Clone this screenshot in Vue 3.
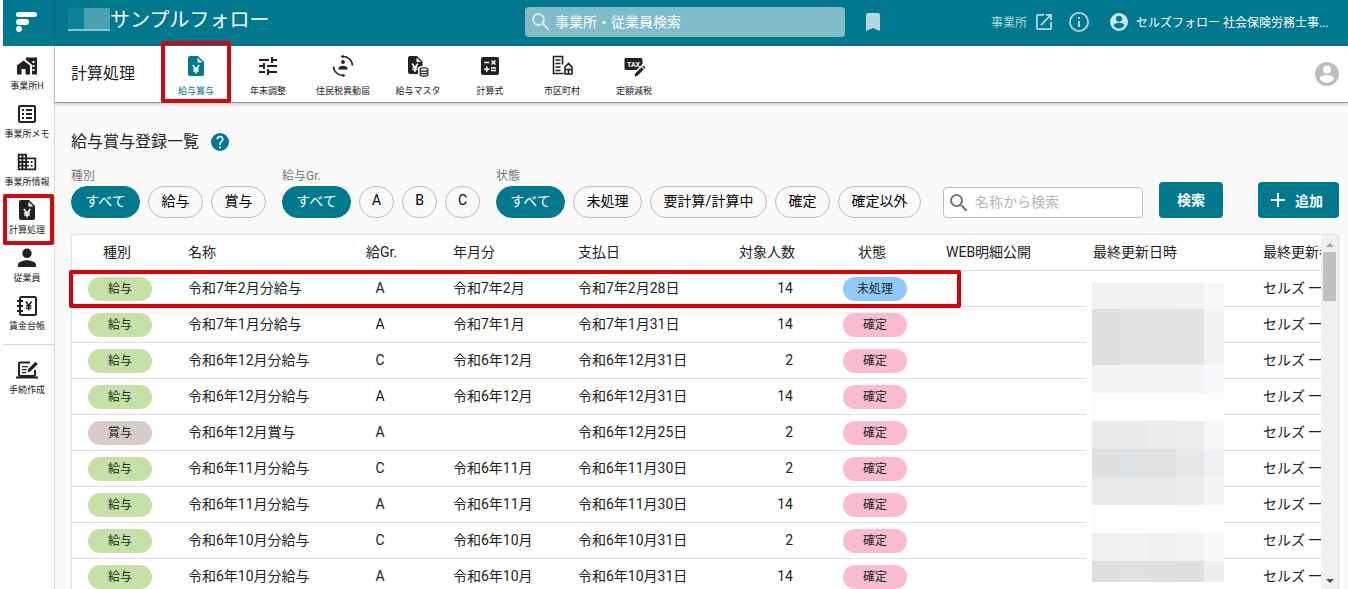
<script setup>
import { ref } from 'vue'

const keyword = ref('')
const globalKeyword = ref('')

const sideItems = [
  { label: '事業所H', icon: 'home' },
  { label: '事業所メモ', icon: 'list' },
  { label: '事業所情報', icon: 'building' },
  { label: '計算処理', icon: 'yen', marked: true },
  { label: '従業員', icon: 'person' },
  { label: '賃金台帳', icon: 'ledger' },
]

const tools = [
  { label: '給与賞与', icon: 'yen', active: true },
  { label: '年末調整', icon: 'tune' },
  { label: '住民税異動届', icon: 'move' },
  { label: '給与マスタ', icon: 'master' },
  { label: '計算式', icon: 'calc' },
  { label: '市区町村', icon: 'city' },
  { label: '定額減税', icon: 'tax' },
]

const groups = [
  { label: '種別', chips: [['すべて', 'w3'], ['給与', 'w2'], ['賞与', 'w2']] },
  { label: '給与Gr.', chips: [['すべて', 'w3'], ['A', 'w1'], ['B', 'w1'], ['C', 'w1']] },
  {
    label: '状態',
    chips: [['すべて', 'w3'], ['未処理', 'w3'], ['要計算/計算中', 'w6'], ['確定', 'w2'], ['確定以外', 'w4']],
  },
]
const selected = ref([0, 0, 0])

const rows = [
  ['給与', '令和7年2月分給与', 'A', '令和7年2月', '令和7年2月28日', 14, '未処理'],
  ['給与', '令和7年1月分給与', 'A', '令和7年1月', '令和7年1月31日', 14, '確定'],
  ['給与', '令和6年12月分給与', 'C', '令和6年12月', '令和6年12月31日', 2, '確定'],
  ['給与', '令和6年12月分給与', 'A', '令和6年12月', '令和6年12月31日', 14, '確定'],
  ['賞与', '令和6年12月賞与', 'A', '', '令和6年12月25日', 2, '確定'],
  ['給与', '令和6年11月分給与', 'C', '令和6年11月', '令和6年11月30日', 2, '確定'],
  ['給与', '令和6年11月分給与', 'A', '令和6年11月', '令和6年11月30日', 14, '確定'],
  ['給与', '令和6年10月分給与', 'C', '令和6年10月', '令和6年10月31日', 2, '確定'],
  ['給与', '令和6年10月分給与', 'A', '令和6年10月', '令和6年10月31日', 14, '確定'],
]

const mosaic = [
  '#f1f1f1', '#f1f1f2', '#f2f1f2', '#f2f2f2', '#f8f8f9',
  '#e0dedf', '#e0e2e4', '#e2e2e1', '#e2e2e0', '#f2f2f3',
  '#e0dedf', '#e0e2e4', '#e2e2e1', '#e2e2e0', '#f2f2f3',
  '#f4f4f4', '#f5f5f6', '#f4f4f5', '#f4f4f5', '#f7f8fb',
  '#fdfdfd', '#fdfdfd', '#fdfdfd', '#fdfdfd', '#fdfdfd',
  '#eae8e9', '#e8e9eb', '#ebebeb', '#eeebec', '#f6f7f8',
  '#e0dedf', '#dfe2e5', '#e2e1df', '#e8e7e8', '#eef0f3',
  '#eae8e9', '#e8e9eb', '#eae9e9', '#eaeaea', '#f4f4f4',
  '#fdfdfd', '#fdfdfd', '#fdfdfd', '#fdfdfd', '#fdfdfd',
  '#f0eff0', '#f2f2f3', '#f0f0f0', '#f4f2f3', '#f9f9f9',
  '#dfdedd', '#dfe0e2', '#e0dfdf', '#dfdedd', '#eceef0',
]
</script>

<template>
  <svg class="sprite" aria-hidden="true">
    <symbol id="home" viewBox="0 0 24 24">
      <path d="M2 11.500v9h4.500v-5.500h4v5.500h4.500v-9L8.500 6.500z" />
      <path fill-rule="evenodd" d="M11 3.500v2.600l6 4.700v9.700h5v-17zM17.500 7h2v2h-2zM17.500 11h2v2h-2zM17.500 15h2v2h-2z" />
    </symbol>
    <symbol id="list" viewBox="0 0 24 24">
      <path d="M11 15h6v2h-6v-2m0-8h6v2h-6V7m0 4h6v2h-6v-2M7 7h2v2H7V7m0 4h2v2H7v-2m0 4h2v2H7v-2M19 3H5a2 2 0 0 0-2 2v14a2 2 0 0 0 2 2h14a2 2 0 0 0 2-2V5a2 2 0 0 0-2-2m0 16H5V5h14v14z" />
    </symbol>
    <symbol id="building" viewBox="-1 -1 26 26">
      <path d="M12 7V3H2v18h20V7H12zM6 19H4v-2h2v2zm0-4H4v-2h2v2zm0-4H4V9h2v2zm0-4H4V5h2v2zm4 12H8v-2h2v2zm0-4H8v-2h2v2zm0-4H8V9h2v2zm0-4H8V5h2v2zm10 12h-8v-2h2v-2h-2v-2h2v-2h-2V9h8v10zm-2-8h-2v2h2v-2zm0 4h-2v2h2v-2z" />
    </symbol>
    <symbol id="yen" viewBox="0 0 24 24">
      <path fill-rule="evenodd" d="M6 2h8l6 6v12a2 2 0 0 1-2 2H6a2 2 0 0 1-2-2V4a2 2 0 0 1 2-2zM13.500 3.700V8.500h4.800z" />
      <path class="cut" d="M8.800 11l3.200 4.200 3.200-4.200M12 15v4.500M9.200 15h5.600M9.200 17h5.600" />
    </symbol>
    <symbol id="person" viewBox="1 1 22 22">
      <path d="M12 12a4.300 4.300 0 1 0 0-8.600 4.300 4.300 0 0 0 0 8.600zm0 2c-3 0-8.300 1.400-8.300 4.300v2h16.600v-2c0-2.900-5.300-4.300-8.300-4.300z" />
    </symbol>
    <symbol id="ledger" viewBox="0 0 24 24">
      <rect class="line" x="5" y="3" width="16" height="18" rx="1.500" />
      <path class="line" d="M2 7h6M2 12h6M2 17h6" />
      <path class="line thin" d="M10.800 7.500l2.900 4 2.900-4M13.700 11.500v5M11 12h5.400M11 14.200h5.400" />
    </symbol>
    <symbol id="apply" viewBox="0 0 24 24">
      <path class="line" d="M15 4.500H5a1 1 0 0 0-1 1V17a1 1 0 0 0 1 1h14a1 1 0 0 0 1-1v-5" />
      <path d="M1 18.500h22v2H1zM7 8h6v1.300H7zM7 11h4.500v1.300H7zM7 14h4v1.300H7z" />
      <path d="M12.500 14.500l.8-3.500 7.200-7.200 2.300 2.300-7.200 7.200z" />
    </symbol>
    <symbol id="tune" viewBox="0 0 24 24">
      <path d="M3 17v2h6v-2H3zM3 5v2h10V5H3zm10 16v-2h8v-2h-8v-2h-2v6h2zM7 9v2H3v2h4v2h2V9H7zm14 4v-2H11v2h10zm-6-4h2V7h4V5h-4V3h-2v6z" />
    </symbol>
    <symbol id="move" viewBox="0 0 24 24">
      <path class="line thin" d="M11 2.500a9.500 9.500 0 0 1 10.500 9M2.500 12.500A9.500 9.500 0 0 0 13 21.500" />
      <path d="M9.500 2.500l3-1.800v3.600zM14.500 21.500l-3 1.800v-3.600z" />
      <circle cx="12" cy="8" r="1.900" />
      <path d="M7.500 15.500v-1c0-1.800 2.300-2.700 4.500-2.700s4.500.9 4.500 2.700v1z" />
    </symbol>
    <symbol id="master" viewBox="0 0 24 24">
      <path fill-rule="evenodd" d="M4 2h7l5.500 5.500V12c-3 0-4.500 1-4.500 2.500V20H4a2 2 0 0 1-2-2V4a2 2 0 0 1 2-2zM10.500 3.500v4.500H15z" />
      <path class="cut" d="M6 9.500l3 4 3-4M9 13v5M6.500 13.500h5M6.500 15.500h5" />
      <ellipse class="coin" cx="18" cy="20.500" rx="4" ry="1.700" />
      <ellipse class="coin" cx="18" cy="18" rx="4" ry="1.700" />
      <ellipse class="coin" cx="18" cy="15.500" rx="4" ry="1.700" />
    </symbol>
    <symbol id="calc" viewBox="0 0 24 24">
      <path d="M19 3H5c-1.100 0-2 .9-2 2v14c0 1.100.9 2 2 2h14c1.100 0 2-.9 2-2V5c0-1.100-.9-2-2-2zm-5.970 4.060L14.090 6l1.410 1.410L16.910 6l1.060 1.060-1.410 1.410 1.410 1.410-1.060 1.060-1.410-1.400-1.410 1.410-1.060-1.060 1.410-1.410-1.410-1.420zm-6.780.66h5v1.500h-5v-1.500zM11.500 16h-2v2H8v-2H6v-1.500h2v-2h1.500v2h2V16zm6.500 1.250h-5v-1.500h5v1.500zm0-2.500h-5v-1.500h5v1.500z" />
    </symbol>
    <symbol id="city" viewBox="0 0 24 24">
      <path class="line thin" d="M13.500 19.500H3.500v-17h9v8M5.500 6h5M5.500 9.500h5M5.500 13h5M5.500 16.500h5" />
      <path class="line thin" d="M15 20v-7l3.500-3.500L22 13v7zM18.500 20v-4M15 15.500h7" />
    </symbol>
    <symbol id="search" viewBox="0 0 24 24">
      <path d="M15.500 14h-.79l-.28-.27A6.470 6.470 0 0 0 16 9.500 6.500 6.500 0 1 0 9.500 16c1.610 0 3.090-.59 4.230-1.570l.27.28v.79l5 4.990L20.490 19l-4.990-5zm-6 0C7.010 14 5 11.990 5 9.500S7.010 5 9.500 5 14 7.010 14 9.500 11.990 14 9.500 14z" />
    </symbol>
    <symbol id="account" viewBox="2 2 20 20">
      <path d="M12 2a10 10 0 1 0 0 20 10 10 0 0 0 0-20zm0 3a3.300 3.300 0 1 1 0 6.600A3.300 3.300 0 0 1 12 5zm0 14.200a7.200 7.200 0 0 1-6-3.220c.03-1.990 4-3.080 6-3.080s5.970 1.090 6 3.080a7.200 7.200 0 0 1-6 3.220z" />
    </symbol>
  </svg>

  <div class="app">
    <header class="topbar">
      <a class="logo" href="#" aria-label="ホーム">
        <svg viewBox="0 0 21 20"><rect width="21" height="5" rx="2.500" /><rect y="7" width="13" height="6" rx="3" /><circle cx="3" cy="17" r="3" /></svg>
      </a>
      <div class="office"><span class="masked"><i></i><i></i></span><span>サンプルフォロー</span></div>
      <label class="gsearch">
        <svg class="i24"><use href="#search" /></svg>
        <input v-model="globalKeyword" type="text" placeholder="事業所・従業員検索" aria-label="事業所・従業員検索" />
      </label>
      <button class="bookmark" aria-label="ブックマーク"><svg viewBox="0 0 14 18"><path d="M2 0h10a2 2 0 0 1 2 2v16l-7-3-7 3V2a2 2 0 0 1 2-2z" /></svg></button>
      <a class="officelink" href="#"><span>事業所</span>
        <svg viewBox="3 3 18 18"><path d="M19 19H5V5h7V3H5a2 2 0 0 0-2 2v14a2 2 0 0 0 2 2h14c1.100 0 2-.9 2-2v-7h-2v7zM14 3v2h3.590l-9.830 9.830 1.410 1.410L19 6.410V10h2V3h-7z" /></svg>
      </a>
      <button class="info" aria-label="情報"><svg viewBox="2 2 20 20"><path d="M11 7h2v2h-2zm0 4h2v6h-2zm1-9a10 10 0 1 0 0 20 10 10 0 0 0 0-20zm0 18.200a8.200 8.200 0 1 1 0-16.400 8.200 8.200 0 0 1 0 16.400z" /></svg></button>
      <button class="user"><svg><use href="#account" /></svg><span>セルズフォロー 社会保険労務士事...</span></button>
    </header>

    <div class="body">
      <nav class="side">
        <a v-for="s in sideItems" :key="s.label" href="#" :class="['sideitem', { marked: s.marked }]">
          <svg class="i24"><use :href="'#' + s.icon" /></svg>{{ s.label }}
        </a>
        <hr />
        <a href="#" class="sideitem"><svg class="i24"><use href="#apply" /></svg>手続作成</a>
      </nav>

      <div class="main">
        <div class="toolbar">
          <h1>計算処理</h1>
          <a v-for="t in tools" :key="t.label" href="#" :class="['tool', { active: t.active }]">
            <svg v-if="t.icon === 'tax'" class="i24" viewBox="0 0 24 24">
              <path d="M3 4h16a1.500 1.500 0 0 1 1.500 1.500V10l-6 6H4a1.500 1.500 0 0 1-1.500-1.500v-9A1.500 1.500 0 0 1 3 4z" />
              <text class="tax" x="11.500" y="12.500" text-anchor="middle">TAX</text>
              <path class="pen" d="M12.500 22.500l.7-3 6.300-6.300 2.300 2.300-6.300 6.300zM20.300 12.400l1-1 2.300 2.300-1 1z" />
            </svg>
            <svg v-else class="i24"><use :href="'#' + t.icon" /></svg>{{ t.label }}
          </a>
          <button class="avatar" aria-label="アカウント"><svg><use href="#account" /></svg></button>
        </div>

        <main class="content">
          <h2>給与賞与登録一覧
            <svg viewBox="2 2 20 20"><path d="M12 2a10 10 0 1 0 0 20 10 10 0 0 0 0-20zm1 17h-2v-2h2v2zm2.070-7.750l-.9.920C13.450 12.900 13 13.500 13 15h-2v-.5c0-1.100.45-2.100 1.170-2.830l1.240-1.260c.37-.36.590-.86.590-1.410a2 2 0 1 0-4 0H8a4 4 0 1 1 8 0c0 .88-.36 1.680-.93 2.250z" /></svg>
          </h2>

          <div class="filters">
            <div v-for="(g, gi) in groups" :key="g.label" class="group" role="group" :aria-label="g.label">
              <span class="glabel">{{ g.label }}</span>
              <div class="chips">
                <button v-for="(c, ci) in g.chips" :key="c[0]" :class="['chip', c[1], { on: selected[gi] === ci }]" @click="selected[gi] = ci">{{ c[0] }}</button>
              </div>
            </div>
            <label class="field">
              <svg class="i24"><use href="#search" /></svg>
              <input v-model="keyword" type="text" placeholder="名称から検索" aria-label="名称から検索" />
            </label>
            <button class="btn">検索</button>
            <button class="btn add"><svg viewBox="0 0 14 14"><path d="M6 0h2v6h6v2H8v6H6V8H0V6h6z" /></svg>追加</button>
          </div>

          <section class="card">
            <div class="scroller">
              <table>
                <colgroup>
                  <col class="c100" /><col class="c178" /><col class="c87" /><col class="c125" /><col class="c161" />
                  <col class="c104" /><col class="c103" /><col class="c147" /><col class="c170" /><col class="c160" />
                </colgroup>
                <thead>
                  <tr>
                    <th class="kind">種別</th><th>名称</th><th>給Gr.</th><th>年月分</th><th>支払日</th>
                    <th>対象人数</th><th class="kind">状態</th><th>WEB明細公開</th><th>最終更新日時</th><th>最終更新者</th>
                  </tr>
                </thead>
                <tbody>
                  <tr v-for="(r, i) in rows" :key="i">
                    <td class="bcell"><span :class="['badge', r[0] === '賞与' ? 'bonus' : 'pay']">{{ r[0] }}</span></td>
                    <td>{{ r[1] }}</td>
                    <td class="gr">{{ r[2] }}</td>
                    <td>{{ r[3] }}</td>
                    <td>{{ r[4] }}</td>
                    <td class="num">{{ r[5] }}</td>
                    <td class="bcell"><span :class="['badge', r[6] === '確定' ? 'fixed' : 'todo']">{{ r[6] }}</span></td>
                    <td></td>
                    <td></td>
                    <td>セルズ 一</td>
                  </tr>
                </tbody>
              </table>
              <div class="mosaic"><i v-for="(m, i) in mosaic" :key="i" :style="{ background: m }"></i></div>
            </div>
            <div class="bar">
              <svg class="up" viewBox="0 0 8 5"><path d="M0 5l4-4 4 4z" /></svg>
              <div class="thumb"></div>
              <svg class="down" viewBox="0 0 8 5"><path d="M0 0l4 4 4-4z" /></svg>
            </div>
            <div class="rowmark"></div>
          </section>
        </main>
      </div>
    </div>
  </div>
</template>

<style>
body { margin: 0; background: #fff; overflow: hidden; }
</style>

<style scoped>
*, *::after { box-sizing: border-box; }
.sprite { position: absolute; width: 0; height: 0; }
.app {
  height: 100vh; padding-left: 3px; display: flex; flex-direction: column; overflow: hidden;
  font-family: Roboto, "Noto Sans CJK JP", sans-serif; font-size: 14px; color: #212121;
}
svg { fill: currentColor; flex: none; display: block; }
a { color: inherit; text-decoration: none; }
button { font: inherit; color: inherit; border: 0; background: none; padding: 0; margin: 0; cursor: pointer; white-space: nowrap; }
input { font: inherit; color: inherit; border: 0; background: none; padding: 0 0 2px; outline: 0; min-width: 0; flex: 1; }
.i24 { width: 24px; height: 24px; }
.cut { fill: none; stroke: #fff; stroke-width: 1.5; }
.line { fill: none; stroke: currentColor; stroke-width: 2; }
.thin { stroke-width: 1.6; }
.coin { fill: #fff; stroke: currentColor; stroke-width: 1.2; }
.tax { font-size: 7px; font-weight: 700; fill: #fff; }
.pen { stroke: #fff; stroke-width: 1; paint-order: stroke; }

.topbar { height: 46px; flex: none; background: #00788d; color: #fff; display: flex; align-items: center; padding: 0 17px 2px 0; }
.logo { width: 52px; height: 44px; border-right: 1px solid #006b80; display: flex; align-items: center; padding-left: 13px; }
.logo svg { width: 21px; height: 20px; }
.office { width: 457px; height: 46px; margin-left: 13px; padding-bottom: 5px; font-size: 20px; line-height: 24px; display: flex; align-items: center; white-space: nowrap; }
.masked { display: flex; width: 42px; height: 23px; border-bottom: 2px solid #8cc4d0; }
.masked i:first-child { width: 16px; background: #0a8297; }
.masked i:last-child { width: 26px; background: #4a9fb0; }
.gsearch { width: 320px; height: 30px; border-radius: 4px; background: #80bbc7; display: flex; align-items: center; padding-left: 4px; gap: 2px; }
.gsearch svg { color: #d3e9ed; }
.gsearch input { padding-bottom: 0; }
.gsearch input::placeholder { color: #fff; opacity: 1; }
.bookmark { margin-left: 21px; color: #b3d7dd; }
.bookmark svg { width: 14px; height: 18px; }
.officelink { margin-left: auto; font-size: 12px; color: #b3d7dd; display: flex; align-items: center; gap: 9px; }
.officelink span, .user span { padding-bottom: 2px; }
.officelink svg { width: 16px; height: 16px; }
.info { margin-left: 17px; color: #b3d7dd; }
.info svg { width: 20px; height: 20px; }
.user { margin-left: 21px; display: flex; align-items: center; gap: 8px; font-size: 12px; }
.user span { min-width: 195px; text-align: left; }
.user svg { width: 18px; height: 18px; color: #cce5ea; }

.body { flex: 1; min-height: 0; display: flex; }
.side { width: 52px; flex: none; border-right: 1px solid #d4d4d4; padding-top: 8px; }
.sideitem { height: 48px; padding-right: 3px; display: flex; flex-direction: column; align-items: center; gap: 1px; font-size: 9px; line-height: 14px; white-space: nowrap; position: relative; }
.marked::after { content: ""; position: absolute; left: 0; right: 0; top: -4px; height: 51px; border: 4px solid #cc0a12; border-radius: 2px; }
.side hr { border: 0; border-top: 1px solid #d4d4d4; margin: 2px 0 13px; }

.main { flex: 1; min-width: 0; display: flex; flex-direction: column; background: #fafafa; }
.toolbar { height: 57px; flex: none; background: #fff; border-bottom: 1px solid #999; box-shadow: 0 1px 4px rgba(0, 0, 0, .25); display: flex; padding: 0 9px 0 16px; position: relative; }
h1 { width: 89px; margin: 0; font-size: 16px; font-weight: 400; line-height: 55px; }
.tool { min-width: 72px; padding: 8px 12px 0; display: flex; flex-direction: column; align-items: center; gap: 6px; font-size: 9px; line-height: 14px; white-space: nowrap; position: relative; }
.tool.active { color: #00788d; }
.tool.active::after { content: ""; position: absolute; left: 1px; right: 1px; top: -5px; height: 62px; border: 4px solid #cc0a12; border-radius: 2px; }
.avatar { margin-left: auto; color: #bdbdbd; }
.avatar svg { width: 24px; height: 24px; }

.content { flex: 1; min-height: 0; padding: 27px 9px 0 16px; display: flex; flex-direction: column; }
h2 { margin: 0; font-size: 16px; font-weight: 400; line-height: 24px; display: flex; align-items: center; gap: 12px; }
h2 svg { width: 18px; height: 18px; color: #00788d; }
.filters { margin-top: 14px; display: flex; align-items: flex-end; }
.group { margin-right: 16px; }
.glabel { display: block; font-size: 12px; line-height: 16px; margin-bottom: 2px; color: #757575; }
.chips { display: flex; gap: 8px; }
.chip { height: 32px; border: 1px solid #bdbdbd; border-radius: 16px; padding-bottom: 4px; color: #000; }
.chip.on { background: #00788d; border-color: #00788d; color: #fff; }
.w1 { width: 35px; }
.w2 { width: 55px; }
.w3 { width: 69px; }
.w4 { width: 83px; }
.w6 { width: 117px; }
.field { width: 200px; height: 31px; margin-left: 6px; background: #fff; border: 1px solid #bdbdbd; border-radius: 4px; display: flex; align-items: center; padding-left: 3px; gap: 4px; }
.field svg { color: #757575; }
.field input::placeholder { color: #b5b5b5; opacity: 1; }
.btn { width: 64px; height: 36px; margin-left: 16px; padding-bottom: 2px; border-radius: 4px; background: #00788d; color: #fff; font-weight: 700; }
.add { width: 81px; margin-left: auto; padding: 0 3px 0 0; display: flex; align-items: center; justify-content: center; gap: 10px; }
.add svg { width: 14px; height: 14px; }

.card { flex: 1; min-height: 0; margin-top: 16px; background: #fff; border: 1px solid #e2e2e2; border-bottom: 0; border-radius: 4px 4px 0 0; box-shadow: 0 0 2px rgba(0, 0, 0, .12); display: flex; position: relative; }
.scroller { flex: 1; min-width: 0; overflow: hidden; position: relative; }
table { width: 1335px; table-layout: fixed; border-collapse: separate; border-spacing: 0; }
.c100 { width: 100px; }
.c178 { width: 178px; }
.c87 { width: 87px; }
.c125 { width: 125px; }
.c161 { width: 161px; }
.c104 { width: 104px; }
.c103 { width: 103px; }
.c147 { width: 147px; }
.c170 { width: 170px; }
.c160 { width: 160px; }
th, td { height: 36px; padding: 0 0 2px 16px; border-bottom: 1px solid #dcdcdc; font-weight: 400; text-align: left; white-space: nowrap; line-height: 20px; }
.kind { padding-left: 31px; }
.bcell { padding-bottom: 0; }
.gr { padding-right: 43px; text-align: center; }
.num { padding-right: 34px; text-align: right; }
.badge { display: block; width: 64px; height: 24px; border-radius: 12px; font-size: 12px; line-height: 24px; text-align: center; }
.pay { background: #c5e1a5; }
.bonus { background: #d7ccc8; }
.todo { background: #90caf9; }
.fixed { background: #f8bbd0; }
.mosaic { position: absolute; left: 1014px; top: 40px; width: 138px; height: 307px; padding: 8px 0 0 6px; background: #fff; display: grid; grid-template-columns: repeat(4, 28px) 20px; grid-template-rows: 26px repeat(9, 28px) 21px; }
.bar { width: 17px; flex: none; background: #f0f0f0; display: flex; flex-direction: column; align-items: center; padding: 7px 0 5px; }
.bar svg { width: 8px; height: 5px; }
.up { color: #a3a3a3; }
.thumb { width: 13px; height: 49px; margin: 5px 0 auto; background: #c1c1c1; }
.down { color: #505050; }
.rowmark { position: absolute; left: -3px; top: 35px; width: 892px; height: 38px; border: 4px solid #dc0006; border-radius: 2px; }
</style>
